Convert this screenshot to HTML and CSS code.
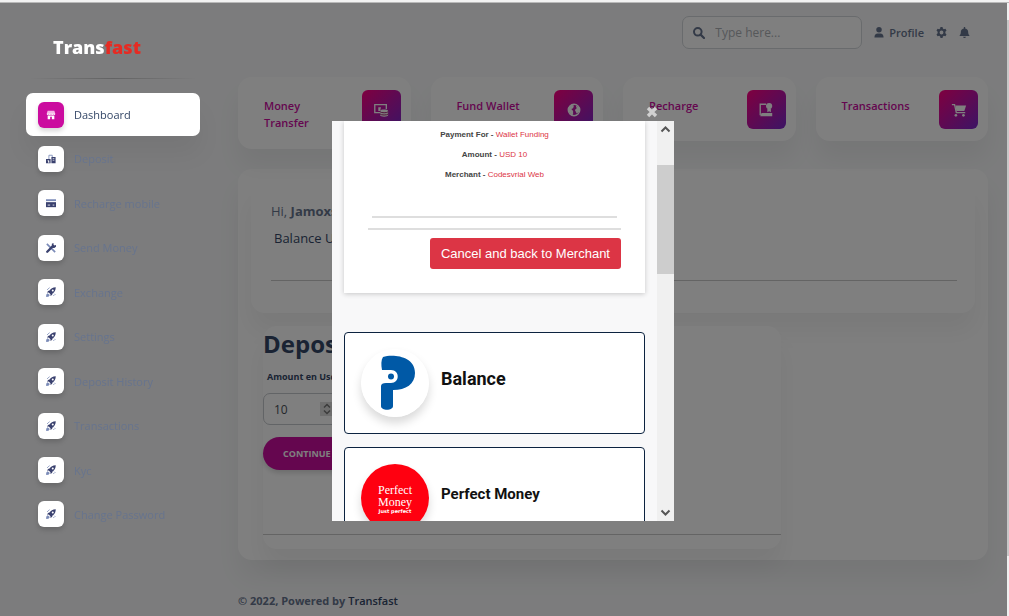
FILE: index.html
```html
<!DOCTYPE html>
<html lang="en">
<head>
<meta charset="utf-8">
<title>Transfast - Dashboard</title>
<link rel="stylesheet" href="styles.css">
</head>
<body>
<svg class="sprite" aria-hidden="true">
  <symbol id="rocket" viewBox="0 0 40 40"><path d="M39 1C27 1 19 6 14 14c-4 0-8 3-9 9l6-1 7 7-1 6c6-1 9-5 9-9C34 21 39 13 39 1zM27 18a4 4 0 1 1 0-8 4 4 0 0 1 0 8z" fill="currentColor"/><path d="M8 27c-4 0-6 5-6 11 6 0 11-2 11-6zM9 7l5-4M4 12l3-3M33 27l4 4M30 33l3 3" fill="#7b8bb8" stroke="#7b8bb8" stroke-width="4"/></symbol>
</svg>
<div class="page">
  <aside class="sidebar">
    <a class="logo" href="#"><span>Trans</span><span class="logo-red">fast</span></a>
    <hr class="fade">
    <nav>
      <ul class="menu">
        <li><a class="item active" href="#"><span class="tile"><svg viewBox="0 0 12 12"><path d="M2 1h8l1 3H1z" fill="#f3b6e5"/><path d="M1 4h10v1.500q-1 1-2 0-1.500 1-3 0-1.500 1-3 0-1 1-2 0zM2 6.500h8V11H7V8H5v3H2z" fill="#fff"/></svg></span>Dashboard</a></li>
        <li><a class="item" href="#"><span class="tile"><svg viewBox="0 0 12 12"><path d="M3.500 6V1.500h4V4" fill="none" stroke="#7b8bb8"/><path d="M0 6h5.500v5H0zM6.500 3.500h5V11h-5z" fill="currentColor"/><path d="M2 8h1.500v3M8 5.500h2M8 7.500h2" stroke="#fff" fill="#fff" stroke-width=".8"/></svg></span>Deposit</a></li>
        <li><a class="item" href="#"><span class="tile"><svg viewBox="0 0 12 12"><path d="M0 1.500h12v2.200H0z" fill="#7b8bb8"/><path d="M0 5h12v6H0z" fill="currentColor"/><path d="M2 8.500h3M8 8.500h2" stroke="#fff"/></svg></span>Recharge mobile</a></li>
        <li><a class="item" href="#"><span class="tile"><svg viewBox="0 0 12 12"><path d="M1 1l10 10" stroke="#7b8bb8" stroke-width="2"/><path d="M1.500 10.500l7-7" stroke="currentColor" stroke-width="2.800" stroke-linecap="round"/><path d="M7 3V1l2-1v2l1 1 2-.5v2L10 6H8z" fill="currentColor"/></svg></span>Send Money</a></li>
        <li><a class="item" href="#"><span class="tile"><svg><use href="#rocket"/></svg></span>Exchange</a></li>
        <li><a class="item" href="#"><span class="tile"><svg><use href="#rocket"/></svg></span>Settings</a></li>
        <li><a class="item" href="#"><span class="tile"><svg><use href="#rocket"/></svg></span>Deposit History</a></li>
        <li><a class="item" href="#"><span class="tile"><svg><use href="#rocket"/></svg></span>Transactions</a></li>
        <li><a class="item" href="#"><span class="tile"><svg><use href="#rocket"/></svg></span>Kyc</a></li>
        <li><a class="item" href="#"><span class="tile"><svg><use href="#rocket"/></svg></span>Change Password</a></li>
      </ul>
    </nav>
  </aside>

  <main class="main">
    <header class="topbar">
      <label class="search">
        <svg viewBox="0 0 12 12"><circle cx="4.800" cy="4.800" r="3.800" fill="none" stroke="currentColor" stroke-width="2"/><path d="M7.600 7.600L11 11" stroke="currentColor" stroke-width="2.200" stroke-linecap="round"/></svg>
        <input type="text" placeholder="Type here..." aria-label="Search">
      </label>
      <a class="profile" href="#"><svg viewBox="0 0 10 12"><circle cx="5" cy="3" r="3"/><path d="M0 11.500C0 8.500 1.500 7 3.500 7h3C8.500 7 10 8.500 10 11.500z"/></svg>Profile</a>
      <button class="icon" type="button" aria-label="Settings"><svg viewBox="0 0 16 16"><path fill-rule="evenodd" d="M6.500 0h3l.5 2.300 1.400.8L13.700 2.400l1.600 2.700-1.700 1.700v2.400l1.700 1.700-1.600 2.700-2.300-.7-1.400.8L9.500 16h-3L6 13.700l-1.400-.8-2.300.7L.7 10.900l1.700-1.700V6.800L.7 5.100l1.600-2.700 2.300.7L6 2.300zM8 5.200a2.800 2.800 0 1 0 0 5.600 2.800 2.800 0 0 0 0-5.600z"/></svg></button>
      <button class="icon" type="button" aria-label="Notifications"><svg viewBox="0 0 14 16"><path d="M6 0h2v2c3 .5 4.300 2.500 4.300 5 0 3 .7 4 1.700 5v1H0v-1c1-1 1.700-2 1.700-5C1.700 4.500 3 2.500 6 2zM5 14h4a2 2 0 0 1-4 0z"/></svg></button>
    </header>

    <section class="stats">
      <a class="stat" href="#"><span>Money Transfer</span><span class="badge"><svg viewBox="0 0 18 18"><path d="M8 12H2V3h13v5" fill="none" stroke="currentColor" stroke-width="1.500"/><path d="M6 6h3l-1 4H6z" fill="currentColor"/><path d="M8 10c0-2 9-2 9 0v5c0 2-9 2-9 0z" fill="currentColor"/><path d="M8 11c1 1.500 8 1.500 9 0M8 13.500c1 1.500 8 1.500 9 0" fill="none" stroke="#93075f"/></svg></span></a>
      <a class="stat" href="#"><span>Fund Wallet</span><span class="badge"><svg viewBox="0 0 18 18"><circle cx="9" cy="9" r="6.500" fill="none" stroke="currentColor" stroke-width="1.500"/><path d="M3 6l3-3 3 1-1 3-2 1 2 2v4l-2 1-3-4zM11 4l4 2v5l-3 2-2-4 2-2z" fill="currentColor"/></svg></span></a>
      <a class="stat" href="#"><span>Recharge</span><span class="badge"><svg viewBox="0 0 18 18"><path d="M9 2.500H2.500V15" fill="none" stroke="currentColor" stroke-width="1.500"/><path d="M4 12.500h12V16H2.500z" fill="currentColor"/><circle cx="12.500" cy="4.500" r="3.500" fill="currentColor"/><path d="M10.500 8h4v3.500l-2-1-2 1z" fill="currentColor"/></svg></span></a>
      <a class="stat" href="#"><span>Transactions</span><span class="badge"><svg viewBox="0 0 18 18"><path d="M1 3h3l2 9h10" fill="none" stroke="currentColor" stroke-width="1.500"/><path d="M5 4h12l-2 6H6z" fill="currentColor"/><circle cx="5.500" cy="15" r="1.500" fill="currentColor"/><circle cx="14" cy="15" r="1.500" fill="currentColor"/></svg></span></a>
    </section>

    <section class="card board">
      <div class="card welcome">
        <p class="hello">Hi, <b>Jamoxs</b></p>
        <p class="balance">Balance USD</p>
        <hr>
      </div>
      <form class="card deposit">
        <h1>Deposit</h1>
        <label for="amount">Amount en Usd</label>
        <div class="amount">
          <input id="amount" type="text" inputmode="numeric" value="10">
          <span class="spin"><svg viewBox="0 0 10 12"><path d="M2 4.500L5 1.500l3 3M2 7.500l3 3 3-3" fill="none" stroke="#777" stroke-width="1.500"/></svg></span>
        </div>
        <button class="continue" type="button">CONTINUE</button>
        <hr>
      </form>
    </section>

    <footer>© 2022, Powered by <a href="#">Transfast</a></footer>
  </main>
</div>

<div class="overlay">
  <div class="modal" role="dialog" aria-label="Payment">
    <button class="close" type="button" aria-label="Close"><svg viewBox="0 0 12 12"><path d="M2 2l8 8M10 2l-8 8" stroke="#d0d0d0" stroke-width="3.400"/></svg></button>
    <div class="frame">
      <div class="pane">
        <section class="receipt">
          <p><b>Payment For -</b> <span>Wallet Funding</span></p>
          <p><b>Amount -</b> <span>USD 10</span></p>
          <p><b>Merchant -</b> <span>Codesvrial Web</span></p>
          <hr class="short">
          <hr>
          <button class="cancel" type="button">Cancel and back to Merchant</button>
        </section>
        <button class="method" type="button">
          <svg class="round" viewBox="0 0 68 68"><circle cx="34" cy="34" r="34" fill="#fff"/><path d="M22 8c10-3 32-1 32 16 0 11-9 17-22 17v16c0 5-12 5-12 0V37c0-2 2-3 5-3h5c9 0 9-13 0-13h-9c-1-5-1-10 1-13z" fill="#0059a6"/><circle cx="30" cy="27.500" r="3" fill="#0059a6"/></svg>
          <span>Balance</span>
        </button>
        <button class="method small" type="button">
          <span class="round pm"><span>Perfect</span><span>Money</span><small>Just perfect</small></span>
          <span>Perfect Money</span>
        </button>
      </div>
      <div class="bar">
        <svg viewBox="0 0 17 17"><path d="M4.500 10.500l4-4 4 4" /></svg>
        <span class="thumb"></span>
        <svg viewBox="0 0 17 17"><path d="M4.500 6.500l4 4 4-4" /></svg>
      </div>
    </div>
  </div>
</div>
<div class="edge"><span></span></div>
</body>
</html>
```
FILE: styles.css
```css
* { box-sizing: border-box; }
body {
  margin: 0;
  border-top: 2px solid #f2f2f2;
  background: #f8f9fa;
  color: #344767;
  font-family: "Open Sans", "Noto Sans", sans-serif;
  font-size: 12px;
  overflow: hidden;
}
a { color: inherit; text-decoration: none; }
p, h1, ul { margin: 0; padding: 0; }
button { border: 0; padding: 0; background: none; font: inherit; color: inherit; }
.sprite { position: absolute; width: 0; height: 0; }

.page {
  display: grid;
  grid-template-columns: 200px minmax(0, 1fr);
  column-gap: 38px;
  min-height: calc(100vh - 2px);
  border-top: 1px solid #b9b9b9;
  padding-right: 21px;
}

/* Sidebar */
.sidebar { position: relative; z-index: 3; padding: 32px 0 0 26px; }
.logo {
  display: flex;
  padding-left: 27px;
  color: #fff;
  font-size: 18px;
  font-weight: 800;
  line-height: 24px;
}
.logo-red { color: #e62b23; }
.fade {
  height: 1px;
  margin: 19px 4px 14px;
  border: 0;
  background: linear-gradient(90deg, transparent, rgba(0, 0, 0, .2), transparent);
}
.menu {
  display: flex;
  flex-direction: column;
  justify-content: space-between;
  height: 443px;
  list-style: none;
}
.item {
  display: flex;
  align-items: center;
  gap: 10px;
  height: 43px;
  padding: 0 12px;
  border-radius: 7px;
  color: #67748e;
  font-size: 11px;
}
.item.active { background: #fff; color: #344767; font-weight: 500; box-shadow: 0 18px 24px rgba(0, 0, 0, .05); }
.tile {
  display: grid;
  place-items: center;
  width: 26px;
  height: 26px;
  border-radius: 6px;
  background: #fff;
  color: #3a416f;
  box-shadow: 0 3px 5px rgba(0, 0, 0, .16);
}
.active .tile { background: #cb0c9f; }
.tile svg { width: 10px; height: 10px; }

/* Top bar */
.topbar { display: flex; align-items: center; justify-content: flex-end; padding: 13px 18px 0 0; color: #67748e; }
.search {
  display: flex;
  align-items: center;
  gap: 8px;
  width: 180px;
  height: 33px;
  margin-right: 12px;
  padding: 0 10px;
  border: 1px solid #d2d6da;
  border-radius: 7px;
  background: #fff;
}
.search svg { flex: none; width: 12px; height: 12px; }
.search input { width: 100%; border: 0; outline: 0; background: none; font: inherit; }
.search input::placeholder { color: #adb0b5; }
.profile { display: flex; align-items: center; gap: 5px; margin-right: 12px; font-size: 11px; font-weight: 600; }
.topbar svg { fill: currentColor; }
.profile svg { width: 10px; height: 11px; }
.icon { display: grid; margin-right: 12px; }
.icon:last-child { margin-right: 0; }
.icon svg { width: 11px; height: 11px; }

/* Stat cards */
.stats { display: grid; grid-template-columns: repeat(4, 1fr); gap: 20px; align-items: start; height: 92px; margin-top: 28px; }
.card, .stat { border-radius: 14px; background: #fff; box-shadow: 0 18px 24px rgba(0, 0, 0, .05); }
.stat {
  display: flex;
  justify-content: space-between;
  align-items: flex-start;
  padding: 13px 10px 12px 26px;
  color: #cb0c9f;
  font-size: 11px;
  font-weight: 600;
  line-height: 17px;
}
.stat > span:first-child { max-width: 72px; padding-top: 7px; }
.stat:first-child > span:first-child { max-width: 60px; padding-bottom: 6px; }
.badge {
  display: grid;
  place-items: center;
  width: 39px;
  height: 39px;
  border-radius: 6px;
  background: linear-gradient(135deg, #ff0080, #7928ca);
  color: #fff;
}
.badge svg { width: 16px; height: 16px; }

/* Board */
.board { padding: 12px 13px 11px; }
.welcome { padding: 20px 18px 32px 20px; font-size: 13px; line-height: 20px; }
.hello { color: #67748e; }
.balance { padding: 7px 0 0 3px; }
hr { height: 1px; margin: 0; border: 0; background: #c9c9c9; }
.welcome hr { margin-top: 32px; }
.deposit { width: calc(100% - 206px); margin-top: 13px; margin-left: 12px; padding-bottom: 14px; }
.deposit h1 { font-size: 24px; line-height: 36px; }
.deposit label { display: block; padding: 7px 4px 8px; font-size: 9px; font-weight: 700; line-height: 16px; }
.amount {
  display: flex;
  align-items: center;
  width: 80px;
  height: 32px;
  padding: 0 10px;
  border: 1px solid #c4c8cc;
  border-radius: 7px;
}
.amount input { width: 46px; padding: 0; border: 0; outline: 0; background: none; color: #495057; font: inherit; }
.spin { display: grid; place-items: center; flex: none; width: 14px; height: 14px; background: #ddd; }
.spin svg { width: 10px; height: 12px; }
.continue {
  display: block;
  margin: 12px 0 64px;
  padding: 0 20px;
  border-radius: 17px;
  background: #cb0c9f;
  color: #fff;
  font-size: 9px;
  font-weight: 700;
  line-height: 33px;
  box-shadow: 0 3px 5px rgba(0, 0, 0, .15);
}
footer { padding: 32px 0 6px; color: #67748e; font-size: 11px; font-weight: 700; line-height: 18px; }
footer a { color: #344767; font-weight: 600; }

/* Modal */
.overlay {
  position: fixed;
  inset: 3px 2px 0 0;
  z-index: 2;
  display: flex;
  align-items: center;
  justify-content: center;
  padding: 22px 1px 0 0;
  background: rgba(0, 0, 0, .5);
}
.modal { position: relative; width: 342px; }
.close { position: absolute; right: 16px; top: -15px; width: 12px; height: 12px; }
.close svg { display: block; }
.frame { display: flex; height: 400px; background: #f8f8f9; }
.pane { flex: 1; padding: 0 12px; overflow: hidden; }
.receipt {
  height: 172px;
  margin-bottom: 39px;
  padding: 4px 24px 0;
  background: #fff;
  box-shadow: 0 1px 5px rgba(0, 0, 0, .2);
  color: #444;
  font-family: "Liberation Sans", Arial, sans-serif;
  font-size: 8px;
  text-align: center;
}
.receipt p { line-height: 20px; }
.receipt span { color: #dc3545; }
.receipt hr { height: 2px; background: #dedede; }
.receipt .short { margin: 31px 4px 10px; }
.cancel {
  display: block;
  margin: 8px 0 0 auto;
  padding: 0 11px;
  border-radius: 3px;
  background: #dc3545;
  color: #fff;
  font-size: 13px;
  line-height: 31px;
  white-space: nowrap;
}
.method {
  display: flex;
  gap: 12px;
  width: 100%;
  height: 102px;
  margin-bottom: 13px;
  padding: 16px;
  border: 1px solid #0c2340;
  border-radius: 4px;
  background: #fff;
  color: #111;
  font-family: Roboto, sans-serif;
  font-size: 18px;
  font-weight: 700;
  line-height: 60px;
  text-align: left;
}
.method.small { font-size: 15px; }
.round { flex: none; width: 68px; height: 68px; border-radius: 50%; box-shadow: 0 6px 10px rgba(0, 0, 0, .15); }
.pm {
  display: flex;
  flex-direction: column;
  align-items: center;
  padding-top: 20px;
  background: #ff0010;
  color: #fff;
  font-family: "Liberation Serif", serif;
  font-size: 12px;
  font-weight: 400;
  line-height: 12px;
}
.pm small { font: 700 5px/6px "DejaVu Sans", sans-serif; }
.bar { display: flex; flex-direction: column; width: 17px; background: #f0f0f0; }
.bar svg { width: 17px; height: 17px; fill: none; stroke: #555; stroke-width: 2; }
.thumb { height: 109px; margin: 27px 0 auto; background: #cdcdcd; }

/* Window scrollbar */
.edge { position: fixed; inset: 3px 0 0 auto; width: 2px; padding-top: 17px; background: #f0f0f0; }
.edge span { display: block; height: 90%; background: #c8c8c8; }
```
